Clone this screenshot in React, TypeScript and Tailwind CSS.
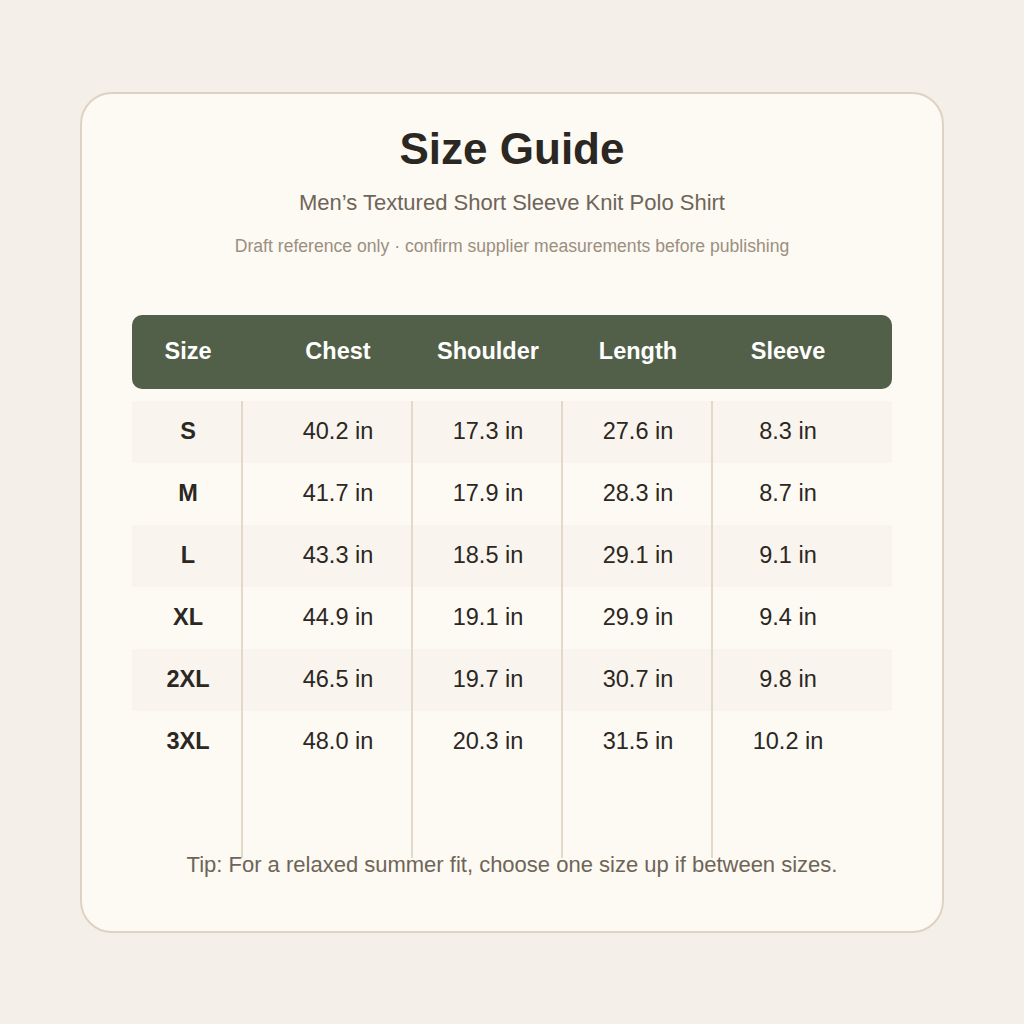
const columns = ["Size", "Chest", "Shoulder", "Length", "Sleeve"];

const rows = [
  ["S", "40.2 in", "17.3 in", "27.6 in", "8.3 in"],
  ["M", "41.7 in", "17.9 in", "28.3 in", "8.7 in"],
  ["L", "43.3 in", "18.5 in", "29.1 in", "9.1 in"],
  ["XL", "44.9 in", "19.1 in", "29.9 in", "9.4 in"],
  ["2XL", "46.5 in", "19.7 in", "30.7 in", "9.8 in"],
  ["3XL", "48.0 in", "20.3 in", "31.5 in", "10.2 in"],
];

export default function App() {
  return (
    <div
      className="min-h-screen w-full bg-[#f4f0e9] flex items-center justify-center"
      style={{ fontFamily: '"Liberation Sans", Arial, sans-serif' }}
    >
      <div className="w-[864px] rounded-[32px] border-2 border-[#ddd3c3] bg-[#fdf9f3] px-[50px] pt-[33px] pb-[52px]">
        {/* Heading */}
        <div className="text-center">
          <h1 className="text-[44px] leading-[44px] font-bold text-[#2b2722]">Size Guide</h1>
          <p className="mt-[18px] text-[22px] leading-[28px] text-[#6d6558]">
            Men’s Textured Short Sleeve Knit Polo Shirt
          </p>
          <p className="mt-[17px] text-[17.6px] leading-[24px] text-[#9b8f7f]">
            Draft reference only · confirm supplier measurements before publishing
          </p>
        </div>

        {/* Table header */}
        <div className="mt-[57px] h-[74px] rounded-[10px] bg-[#536049] grid grid-cols-[repeat(5,150px)] items-center">
          {columns.map((c) => (
            <div key={c} className="pr-[38px] text-center text-[23.5px] font-bold text-white">
              {c}
            </div>
          ))}
        </div>

        {/* Table body */}
        <div className="relative mt-[12px] h-[457px]">
          {rows.map((r, i) => (
            <div
              key={r[0]}
              className={`h-[62px] grid grid-cols-[repeat(5,150px)] items-center ${
                i % 2 === 0 ? "bg-[#f9f4ed]" : ""
              }`}
            >
              {r.map((v, j) => (
                <div
                  key={j}
                  className={`pr-[38px] text-center text-[23.5px] text-[#2b2722] ${
                    j === 0 ? "font-bold" : ""
                  }`}
                >
                  {v}
                </div>
              ))}
            </div>
          ))}
          <div className="absolute inset-y-0 left-[109px] w-[2px] bg-[#e3d9cb]" />
          <div className="absolute inset-y-0 left-[279px] w-[2px] bg-[#e3d9cb]" />
          <div className="absolute inset-y-0 left-[429px] w-[2px] bg-[#e3d9cb]" />
          <div className="absolute inset-y-0 left-[579px] w-[2px] bg-[#e3d9cb]" />
        </div>

        <p className="relative -mt-[7px] text-center text-[22px] leading-[28px] text-[#6d6558]">
          Tip: For a relaxed summer fit, choose one size up if between sizes.
        </p>
      </div>
    </div>
  );
}
